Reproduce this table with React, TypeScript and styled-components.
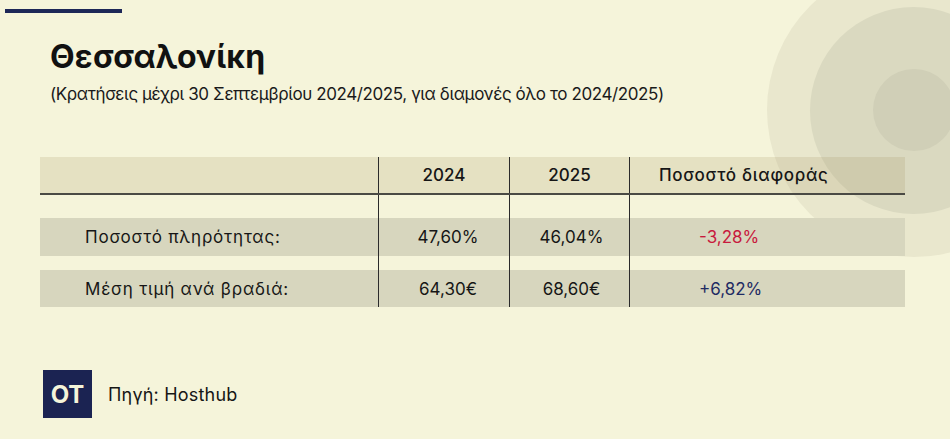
import React from 'react';
import styled, { createGlobalStyle } from 'styled-components';

const Global = createGlobalStyle`
  html, body { margin: 0; padding: 0; background: #f5f4da; }
  body { font-family: Inter, "Noto Sans", sans-serif; color: #161616; }
`;

const Page = styled.div`
  position: relative;
  width: 950px;
  height: 439px;
  overflow: hidden;
  background: #f5f4da;
  padding-top: 9px;
  box-sizing: border-box;
`;

const Circle = styled.div<{ $size: number; $left: number; $top: number; $color: string }>`
  position: absolute;
  left: ${p => p.$left}px;
  top: ${p => p.$top}px;
  width: ${p => p.$size}px;
  height: ${p => p.$size}px;
  border-radius: 50%;
  background: ${p => p.$color};
`;

const Content = styled.div`
  position: relative;
  z-index: 1;
  display: flex;
  flex-direction: column;
`;

const TopBar = styled.div`
  margin-left: 5px;
  width: 117px;
  height: 4px;
  background: #1d2757;
`;

const Title = styled.h1`
  margin: 24px 0 0 50px;
  font-size: 32px;
  line-height: 40px;
  font-weight: 700;
  letter-spacing: 0.2px;
  color: #111;
`;

const Subtitle = styled.p`
  margin: 6px 0 0 50px;
  font-size: 17px;
  line-height: 22px;
  font-weight: 400;
  letter-spacing: -0.4px;
  color: #1a1a1a;
`;

const Table = styled.div`
  margin: 52px 0 0 40px;
  width: 865px;
  display: flex;
  flex-direction: column;
`;

type Variant = 'header' | 'data' | 'spacer';

const Row = styled.div<{ $variant: Variant; $h: number }>`
  display: grid;
  grid-template-columns: 338px 131px 120px 276px;
  height: ${p => p.$h}px;
  background: ${p =>
    p.$variant === 'header' ? 'rgba(165,149,98,0.2)' : p.$variant === 'data' ? '#d7d6be' : 'transparent'};
  border-bottom: ${p => (p.$variant === 'header' ? '2px solid #4a4a44' : 'none')};
  font-size: 17px;
  font-weight: ${p => (p.$variant === 'header' ? 500 : 400)};
`;

const Cell = styled.div<{ $divider?: boolean; $align?: 'left' | 'center'; $pad?: number }>`
  display: flex;
  align-items: center;
  justify-content: ${p => (p.$align === 'left' ? 'flex-start' : 'center')};
  padding-left: ${p => p.$pad ?? 0}px;
  border-left: ${p => (p.$divider ? '1.5px solid #2b2b2b' : 'none')};
  white-space: nowrap;
`;

const Value = styled.span<{ $tone?: 'neg' | 'pos' }>`
  color: ${p => (p.$tone === 'neg' ? '#c81a3d' : p.$tone === 'pos' ? '#1f2b63' : '#161616')};
`;

const Label = styled.span<{ $spacing: number }>`
  letter-spacing: ${p => p.$spacing}px;
`;

const Footer = styled.div`
  margin: 63px 0 0 43px;
  display: flex;
  align-items: center;
  gap: 16px;
`;

const Logo = styled.div`
  width: 49px;
  height: 48px;
  background: #1b2352;
  color: #f5f4da;
  font-weight: 700;
  font-size: 24px;
  display: flex;
  align-items: center;
  justify-content: center;
`;

const Source = styled.span`
  font-size: 18px;
  letter-spacing: 0.2px;
  color: #161616;
`;

const rows = [
  { label: 'Ποσοστό πληρότητας:', a: '47,60%', b: '46,04%', d: '-3,28%', tone: 'neg' as const },
  { label: 'Μέση τιμή ανά βραδιά:', a: '64,30€', b: '68,60€', d: '+6,82%', tone: 'pos' as const },
];

export default function App() {
  return (
    <>
      <Global />
      <Page>
        <Circle $size={294} $left={767} $top={-37} $color="#e9e7cd" />
        <Circle $size={207} $left={810} $top={7} $color="#dad9c0" />
        <Circle $size={82} $left={873} $top={69} $color="#d0cfb7" />
        <Content>
          <TopBar />
          <Title>Θεσσαλονίκη</Title>
          <Subtitle>(Κρατήσεις μέχρι 30 Σεπτεμβρίου 2024/2025, για διαμονές όλο το 2024/2025)</Subtitle>
          <Table>
            <Row $variant="header" $h={36}>
              <Cell />
              <Cell $divider><Value>2024</Value></Cell>
              <Cell $divider><Value>2025</Value></Cell>
              <Cell $divider $align="left" $pad={29}><Label $spacing={0.7}>Ποσοστό διαφοράς</Label></Cell>
            </Row>
            <Row $variant="spacer" $h={23}>
              <Cell /><Cell $divider /><Cell $divider /><Cell $divider />
            </Row>
            {rows.map((r, i) => (
              <React.Fragment key={r.label}>
                <Row $variant="data" $h={i === 0 ? 38 : 37}>
                  <Cell $align="left" $pad={45}><Label $spacing={0.8}>{r.label}</Label></Cell>
                  <Cell $divider $pad={8}><Value>{r.a}</Value></Cell>
                  <Cell $divider $pad={4}><Value>{r.b}</Value></Cell>
                  <Cell $divider $align="left" $pad={69}><Value $tone={r.tone}>{r.d}</Value></Cell>
                </Row>
                {i === 0 && (
                  <Row $variant="spacer" $h={14}>
                    <Cell /><Cell $divider /><Cell $divider /><Cell $divider />
                  </Row>
                )}
              </React.Fragment>
            ))}
          </Table>
          <Footer>
            <Logo>OT</Logo>
            <Source>Πηγή: Hosthub</Source>
          </Footer>
        </Content>
      </Page>
    </>
  );
}
